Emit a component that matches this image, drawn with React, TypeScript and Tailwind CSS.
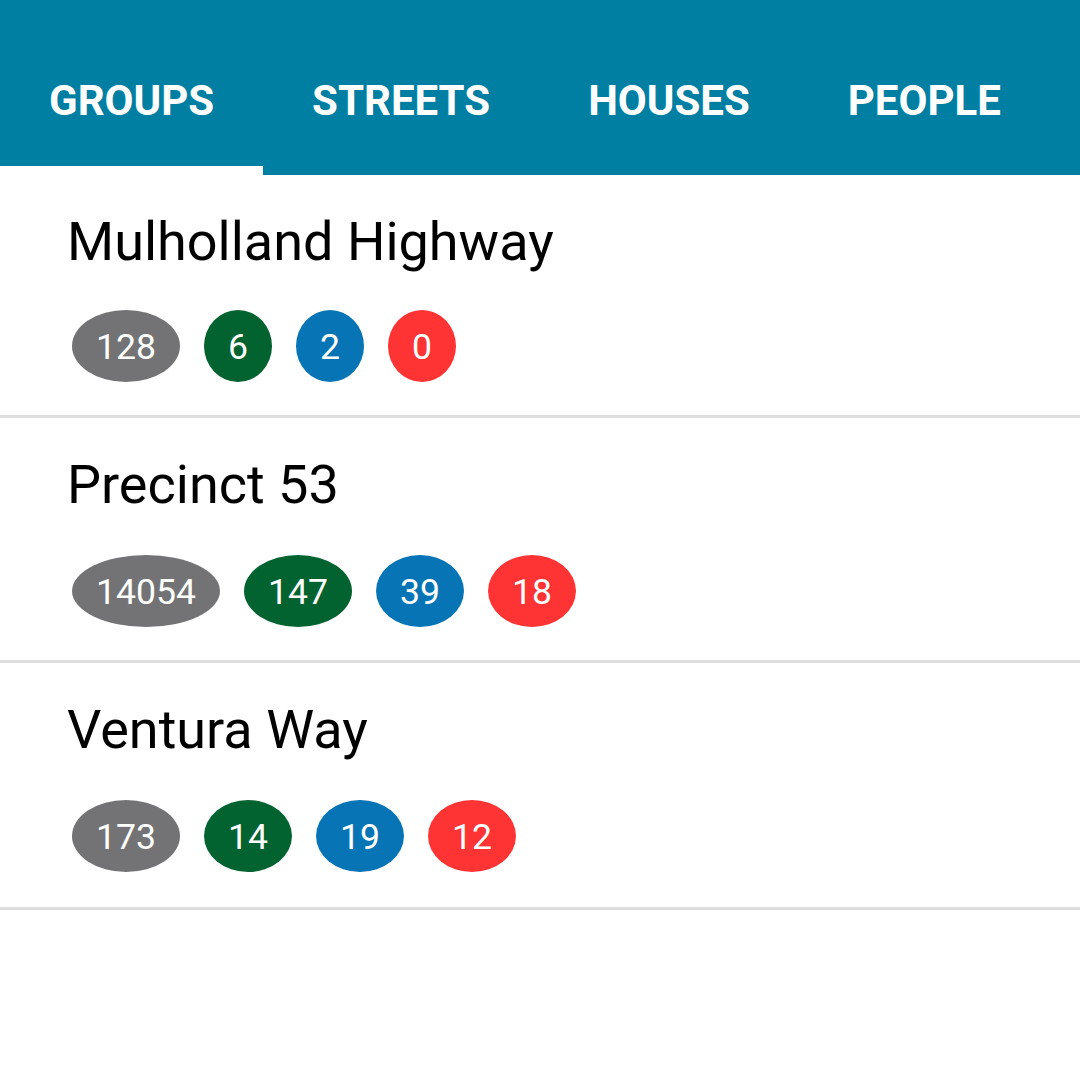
import React from "react";

const tabs = ["GROUPS", "STREETS", "HOUSES", "PEOPLE"];

const rows = [
  { name: "Mulholland Highway", counts: ["128", "6", "2", "0"], h: "h-[243px]", mt: "mt-[33px]" },
  { name: "Precinct 53", counts: ["14054", "147", "39", "18"], h: "h-[245px]", mt: "mt-[35px]" },
  { name: "Ventura Way", counts: ["173", "14", "19", "12"], h: "h-[247px]", mt: "mt-[35px]" },
];

const badgeColors = ["bg-[#737375]", "bg-[#026330]", "bg-[#0775b5]", "bg-[#fe3333]"];

export default function App() {
  return (
    <div className="w-[1080px] h-[1080px] bg-white overflow-hidden" style={{ fontFamily: "Roboto, 'Noto Sans', sans-serif" }}>
      <div className="h-[175px] bg-[#017fa3] flex">
        {tabs.map((t, i) => (
          <div
            key={t}
            className={`h-full px-[49px] pt-[36px] flex items-center text-white font-bold text-[42px] leading-none border-b-[9px] ${i === 0 ? "border-white" : "border-transparent"}`}
          >
            {t}
          </div>
        ))}
      </div>
      {rows.map((r) => (
        <div key={r.name} className={`border-b-[3px] border-[#dedede] ${r.h} pl-[67px] pt-[32px]`}>
          <div className="text-[54px] leading-[70px] text-black">{r.name}</div>
          <div className={`flex gap-[24px] ${r.mt} pl-[5px]`}>
            {r.counts.map((c, j) => (
              <div
                key={j}
                className={`${badgeColors[j]} h-[72px] px-[24px] pt-[4px] rounded-[50%] flex items-center justify-center text-white text-[35.6px] leading-none`}
              >
                {c}
              </div>
            ))}
          </div>
        </div>
      ))}
    </div>
  );
}
